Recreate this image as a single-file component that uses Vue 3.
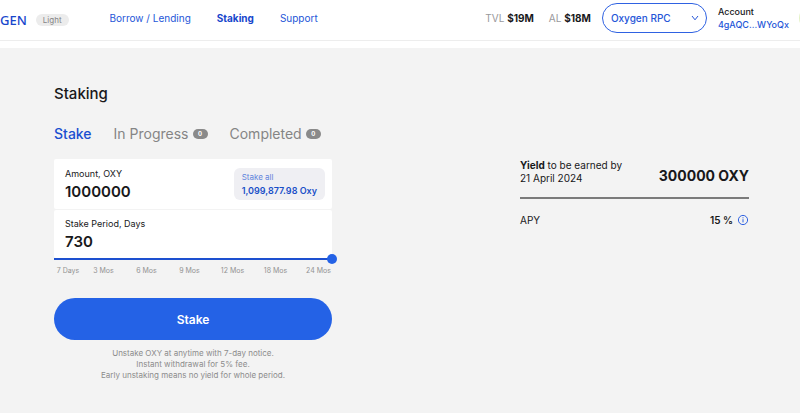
<script setup>
import { ref } from 'vue'

const nav = [
  { label: 'Borrow / Lending', active: false },
  { label: 'Staking', active: true },
  { label: 'Support', active: false },
]
const tabs = [
  { label: 'Stake' },
  { label: 'In Progress', count: 0 },
  { label: 'Completed', count: 0 },
]
const stops = ['7 Days', '3 Mos', '6 Mos', '9 Mos', '12 Mos', '18 Mos', '24 Mos']

const tab = ref('Stake')
const amount = ref('1000000')
const days = ref(730)
</script>

<template>
  <header class="header">
    <div class="brand">
      <a class="logo" href="#">GEN</a>
      <span class="mode">Light</span>
    </div>
    <nav class="nav">
      <a v-for="n in nav" :key="n.label" href="#" :class="{ active: n.active }">{{ n.label }}</a>
    </nav>
    <div class="stats">
      <span>TVL <b>$19M</b></span>
      <span>AL <b>$18M</b></span>
    </div>
    <div class="rpc">
      <select aria-label="RPC endpoint">
        <option>Oxygen RPC</option>
      </select>
      <svg class="chevron" viewBox="0 0 8 6" aria-hidden="true"><path d="M1 1l3 3.8L7 1" /></svg>
    </div>
    <div class="account">
      <span>Account</span>
      <a href="#">4gAQC...WYoQx</a>
    </div>
    <span class="avatar"></span>
  </header>

  <main class="main">
    <section class="form">
      <h1>Staking</h1>
      <div class="tabs">
        <button
          v-for="t in tabs"
          :key="t.label"
          type="button"
          :class="{ active: t.label === tab }"
          @click="tab = t.label"
        >
          {{ t.label }}<span v-if="t.count !== undefined" class="count">{{ t.count }}</span>
        </button>
      </div>

      <div class="field">
        <div class="entry">
          <label for="amount">Amount, OXY</label>
          <input id="amount" v-model="amount" type="text" />
        </div>
        <button class="all" type="button">
          <span>Stake all</span>
          <strong>1,099,877.98 Oxy</strong>
        </button>
      </div>
      <div class="field period">
        <div class="entry">
          <label for="days">Stake Period, Days</label>
          <input id="days" v-model="days" type="text" />
        </div>
      </div>
      <div class="slider">
        <input v-model="days" type="range" min="7" max="730" aria-label="Stake period in days" />
      </div>
      <div class="stops">
        <span v-for="s in stops" :key="s">{{ s }}</span>
      </div>

      <button class="submit" type="button">Stake</button>
      <p class="note">
        Unstake OXY at anytime with 7-day notice.<br />
        Instant withdrawal for 5% fee.<br />
        Early unstaking means no yield for whole period.
      </p>
    </section>

    <section class="summary">
      <div class="yield">
        <p><b>Yield</b> to be earned by<br />21 April 2024</p>
        <strong>300000 OXY</strong>
      </div>
      <div class="apy">
        <span>APY</span>
        <b>15 %</b>
        <svg class="info" viewBox="0 0 12 12" aria-hidden="true">
          <circle cx="6" cy="6" r="4.6" />
          <path d="M6 5.2v3.2M6 3.3v1" />
        </svg>
      </div>
    </section>
  </main>
</template>

<style>
body {
  margin: 0;
  background: #fff;
}
</style>

<style scoped>
.header,
.main {
  font-family: Inter, "Liberation Sans", sans-serif;
  color: #18181a;
}
.header *,
.main * {
  box-sizing: border-box;
}
a {
  color: #2556d8;
  text-decoration: none;
}
button,
input,
select {
  margin: 0;
  padding: 0;
  border: 0;
  background: none;
  color: inherit;
  font: inherit;
}
button {
  cursor: pointer;
}
.header {
  display: flex;
  align-items: center;
  min-height: 36px;
  padding-bottom: 4px;
  border-bottom: 1px solid #ededed;
  overflow: hidden;
  white-space: nowrap;
}
.brand {
  display: flex;
  align-items: center;
  gap: 9px;
  padding-top: 3px;
}
.logo {
  color: #1746cc;
  font-family: "Noto Sans", sans-serif;
  font-size: 13px;
  font-weight: 500;
  line-height: 20px;
}
.mode {
  padding: 0 7px;
  border-radius: 6px;
  background: #ececec;
  color: #858585;
  font-size: 8px;
  line-height: 12px;
}
.nav {
  display: flex;
  gap: 26px;
  margin-left: 41px;
  font-size: 10px;
}
.nav .active {
  color: #1746cc;
  font-weight: 700;
}
.stats {
  display: flex;
  gap: 15px;
  margin-left: auto;
  color: #98989b;
  font-size: 10px;
}
.stats b {
  color: #18181a;
}
.rpc {
  position: relative;
  width: 105px;
  margin-left: 11px;
}
.rpc select {
  display: block;
  width: 100%;
  height: 30px;
  padding: 0 22px 0 8px;
  border: 1px solid #2f62e2;
  border-radius: 15px;
  appearance: none;
  color: #2556d8;
  font-size: 10px;
  font-weight: 500;
}
.chevron {
  position: absolute;
  top: 12px;
  right: 8px;
  width: 8px;
  height: 6px;
  fill: none;
  stroke: #2556d8;
  pointer-events: none;
}
.account {
  display: grid;
  margin-left: 11px;
  font-size: 9px;
  font-weight: 500;
  line-height: 13px;
}
.avatar {
  flex: none;
  width: 24px;
  height: 24px;
  margin: 0 -23px 0 10px;
  border-radius: 50%;
  background: #e3f2c4;
}
.main {
  display: flex;
  justify-content: space-between;
  align-items: flex-start;
  margin-top: 7px;
  padding: 36px 51px 32px 54px;
  background: #f3f3f3;
}
.form {
  width: 278px;
}
h1 {
  margin: 0;
  font-size: 15px;
  font-weight: 500;
  line-height: 20px;
}
.tabs {
  display: flex;
  gap: 22px;
  margin: 20px 0 15px;
  color: #858585;
  font-size: 14px;
  line-height: 20px;
}
.tabs button {
  display: flex;
  align-items: center;
  gap: 4px;
}
.tabs .active {
  color: #1a4fd0;
  font-weight: 500;
}
.count {
  width: 15px;
  border-radius: 5px;
  background: #8a8a8a;
  color: #fff;
  font-size: 6px;
  font-weight: 700;
  line-height: 10px;
  text-align: center;
}
.field {
  display: flex;
  justify-content: space-between;
  align-items: center;
  height: 50px;
  padding: 0 7px 0 11px;
  border-radius: 2px;
  background: #fff;
}
.period {
  height: 48px;
  margin-top: 1px;
}
.entry {
  display: grid;
  flex: 1;
}
.entry label {
  font-size: 9px;
  line-height: 14px;
}
.entry input {
  width: 100%;
  height: 20px;
  font-size: 15px;
  font-weight: 600;
}
.all {
  display: grid;
  padding: 3px 8px;
  border-radius: 6px;
  background: #efeff3;
  color: #1a4fc8;
  font-size: 9px;
  line-height: 13px;
  text-align: left;
  white-space: nowrap;
}
.all span {
  color: #5f85dc;
  font-size: 8px;
}
.all strong {
  font-weight: 600;
}
.slider {
  height: 2px;
  background: #1d50d0;
}
.slider input {
  display: block;
  width: calc(100% + 10px);
  height: 10px;
  margin: 0 -5px;
  appearance: none;
  transform: translateY(-4px);
}
.slider input::-webkit-slider-thumb {
  width: 10px;
  height: 10px;
  border-radius: 50%;
  appearance: none;
  background: #2462e6;
}
.stops {
  display: grid;
  grid-template-columns: 28px repeat(6, 1fr);
  margin: 5px -8px 22px 0;
  color: #929292;
  font-size: 7px;
  line-height: 11px;
  text-align: center;
}
.submit {
  display: block;
  width: 100%;
  height: 42px;
  border-radius: 21px;
  background: #2462e6;
  color: #fff;
  font-size: 12px;
  font-weight: 600;
}
.note {
  margin: 8px 0 0;
  color: #8c8c8c;
  font-size: 8px;
  line-height: 11px;
  text-align: center;
}
.summary {
  width: 229px;
  margin-top: 75px;
  font-size: 10px;
}
.yield {
  display: flex;
  justify-content: space-between;
  align-items: flex-end;
  padding-bottom: 12px;
  border-bottom: 2px solid #7b7b7b;
}
.yield p {
  margin: 0;
  line-height: 13px;
}
.yield strong {
  font-size: 14px;
  line-height: 18px;
}
.apy {
  display: flex;
  align-items: center;
  margin-top: 14px;
  line-height: 14px;
}
.apy b {
  margin-left: auto;
  font-weight: 600;
}
.info {
  width: 12px;
  height: 12px;
  margin-left: 4px;
  fill: none;
  stroke: #2f62e2;
}
</style>
